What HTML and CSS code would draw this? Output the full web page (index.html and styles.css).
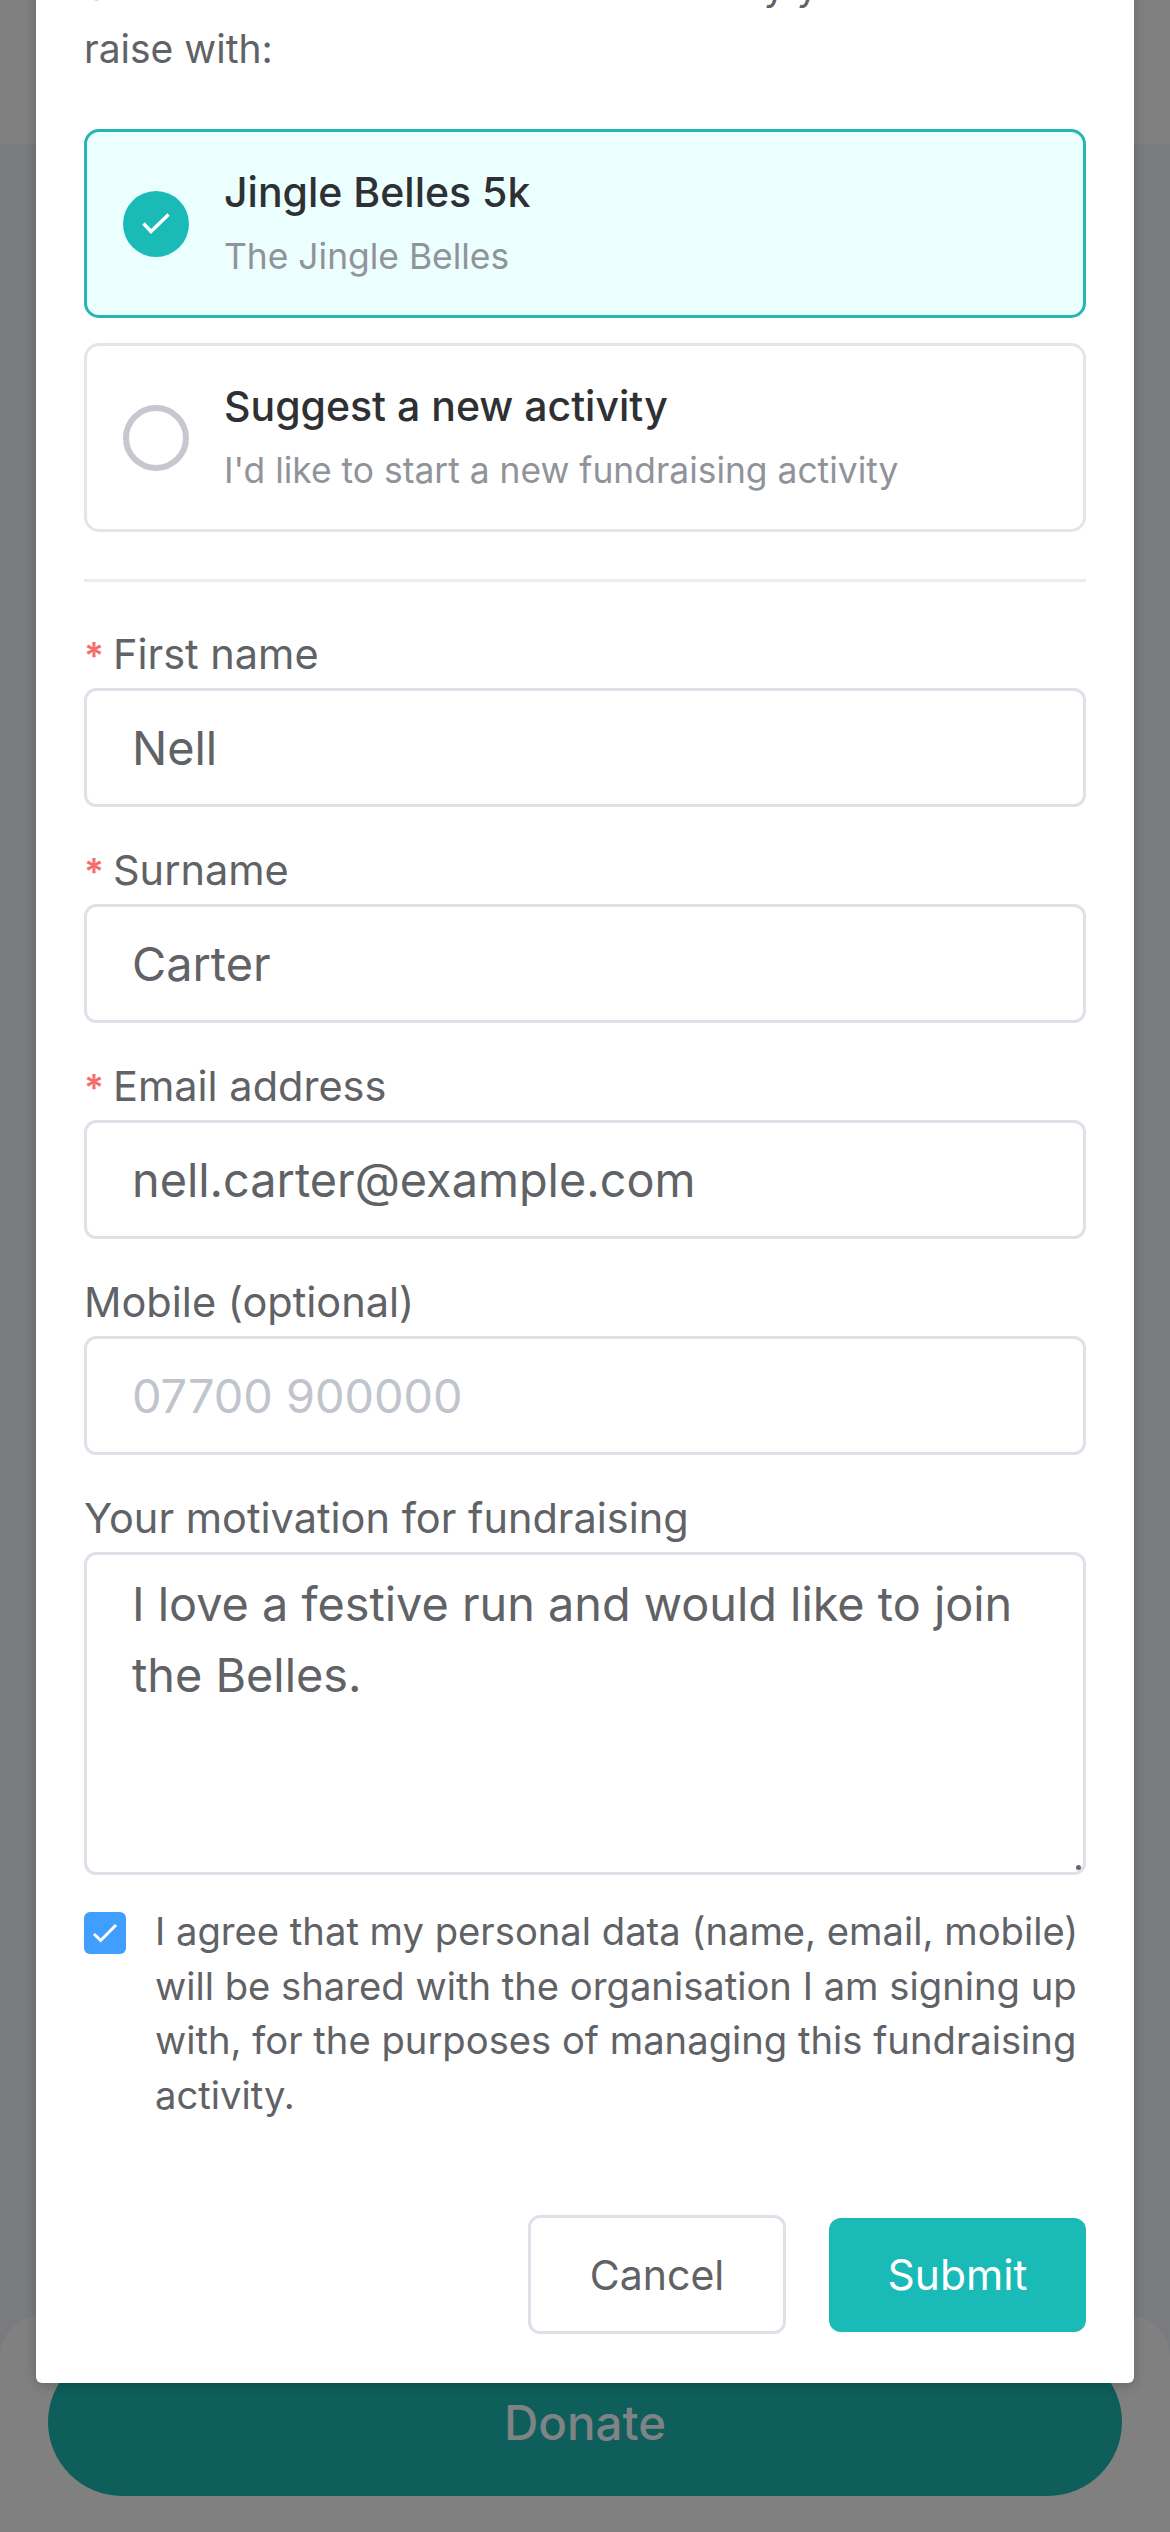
FILE: index.html
```html
<!DOCTYPE html>
<html lang="en">
<head>
<meta charset="utf-8">
<title>Sign up to fundraise</title>
<link rel="stylesheet" href="styles.css">
</head>
<body>
<div class="page">
  <div class="page-head"></div>
  <div class="page-foot">
    <button class="donate" type="button">Donate</button>
  </div>
</div>
<div class="modal">
  <p class="intro">Select below the events or the activity you'd like to raise with:</p>
  <div class="option option-on">
    <span class="radio radio-on">
      <svg viewBox="0 0 30 24" width="30" height="24"><path d="M2.5 11.5 L10 19.5 L27.5 2.5" fill="none" stroke="#fff" stroke-width="3.4"/></svg>
    </span>
    <div class="option-text">
      <div class="option-title">Jingle Belles 5k</div>
      <div class="option-sub">The Jingle Belles</div>
    </div>
  </div>
  <div class="option">
    <span class="radio"></span>
    <div class="option-text">
      <div class="option-title">Suggest a new activity</div>
      <div class="option-sub">I'd like to start a new fundraising activity</div>
    </div>
  </div>
  <hr class="rule">
  <form class="fields">
    <div class="field">
      <label class="label"><span class="req">*</span>First name</label>
      <input class="input" type="text" value="Nell">
    </div>
    <div class="field">
      <label class="label"><span class="req">*</span>Surname</label>
      <input class="input" type="text" value="Carter">
    </div>
    <div class="field">
      <label class="label"><span class="req">*</span>Email address</label>
      <input class="input" type="text" value="nell.carter@example.com">
    </div>
    <div class="field">
      <label class="label">Mobile (optional)</label>
      <input class="input" type="text" placeholder="07700 900000">
    </div>
    <div class="field">
      <label class="label">Your motivation for fundraising</label>
      <div class="area-wrap">
        <textarea class="input area">I love a festive run and would like to join the Belles.</textarea>
      </div>
    </div>
  </form>
  <div class="consent">
    <span class="check">
      <svg viewBox="0 0 26 22" width="26" height="22"><path d="M2 12 L8.7 18.5 L24 3" fill="none" stroke="#fff" stroke-width="3"/></svg>
    </span>
    <p class="consent-text">I agree that my personal data (name, email, mobile) will be shared with the organisation I am signing up with, for the purposes of managing this fundraising activity.</p>
  </div>
  <div class="actions">
    <button class="btn btn-ghost" type="button">Cancel</button>
    <button class="btn btn-primary" type="button">Submit</button>
  </div>
</div>
</body>
</html>
```
FILE: styles.css
```css
* { box-sizing: border-box; }
html, body { margin: 0; padding: 0; }
body {
  width: 1170px;
  height: 2532px;
  overflow: hidden;
  position: relative;
  background: #7a7b7e;
  font-family: Inter, "Noto Sans", sans-serif;
}
.page { height: 100%; display: flex; flex-direction: column; justify-content: space-between; }
.page-head { height: 144px; background: #808080; }
.page-foot {
  height: 216px;
  background: #808080;
  border-radius: 40px 40px 0 0;
  padding: 32px 48px 36px;
}
.donate {
  display: block;
  width: 100%;
  height: 148px;
  border: 0;
  border-radius: 74px;
  background: #0e5e5c;
  color: #7f8384;
  font: 500 47.5px Inter, sans-serif;
}
.modal {
  position: absolute;
  left: 36px;
  top: -46px;
  width: 1098px;
  background: #fff;
  border-radius: 0 0 6px 6px;
  padding: 0 48px 49px 48px;
  box-shadow: 0 3px 12px rgba(0,0,0,.2);
}
.intro {
  margin: 0 0 49px;
  font-size: 39px;
  line-height: 63px;
  color: #606266;
}
.option {
  display: flex;
  align-items: center;
  height: 189px;
  margin-bottom: 25px;
  padding-left: 36px;
  border: 3px solid #e4e5ea;
  border-radius: 15px;
  background: #fff;
}
.option-on { border-color: #25b5b2; background: #ecffff; }
.radio {
  flex: none;
  width: 66px;
  height: 66px;
  border-radius: 50%;
  border: 6px solid #c6c7cf;
  display: flex;
  align-items: center;
  justify-content: center;
}
.radio-on { border: 0; background: #1abab6; }
.option-text { margin-left: 35px; }
.option-title { font-size: 41px; line-height: 50px; font-weight: 500; color: #2e3033; margin-bottom: 17px; }
.option-sub { font-size: 35.4px; line-height: 46px; color: #909399; }
.rule { border: 0; height: 3px; background: #ebebf0; margin: 47px 0 45px; }
.fields { display: flex; flex-direction: column; gap: 36px; }
.field { display: flex; flex-direction: column; gap: 7px; }
.label { font-size: 41.5px; line-height: 54px; color: #606266; }
.req { color: #f56c6c; font-size: 37px; line-height: 1; font-weight: 600; margin-right: 9px; }
.input {
  display: block;
  width: 100%;
  height: 119px;
  padding: 0 45px;
  border: 3px solid #dfe0e8;
  border-radius: 12px;
  background: #fff;
  color: #606266;
  font: 400 46.8px Inter, sans-serif;
  outline: 0;
}
.input::placeholder { color: #c0c4cc; opacity: 1; }
.area-wrap { position: relative; }
.area-wrap::after {
  content: "";
  position: absolute;
  right: 5px;
  bottom: 5px;
  width: 5px;
  height: 5px;
  border-radius: 50%;
  background: #666;
}
.area { height: 323px; padding: 14px 45px; line-height: 70.6px; resize: none; }
.consent { display: flex; align-items: flex-start; gap: 29px; margin-top: 37px; }
.check {
  flex: none;
  width: 42px;
  height: 42px;
  border-radius: 6px;
  background: #409eff;
  display: flex;
  align-items: center;
  justify-content: center;
}
.consent-text { margin: -8px 0 0; font-size: 38.2px; line-height: 54.5px; color: #606266; }
.actions { display: flex; justify-content: flex-end; align-items: center; gap: 43px; margin-top: 93px; }
.btn { border-radius: 12px; font-family: Inter, sans-serif; font-weight: 400; }
.btn-ghost { width: 258px; height: 119px; background: #fff; border: 3px solid #dfe0e8; color: #606266; font-size: 41px; }
.btn-primary { width: 257px; height: 114px; background: #1abab6; border: 0; color: #fff; font-size: 42.5px; }
```
